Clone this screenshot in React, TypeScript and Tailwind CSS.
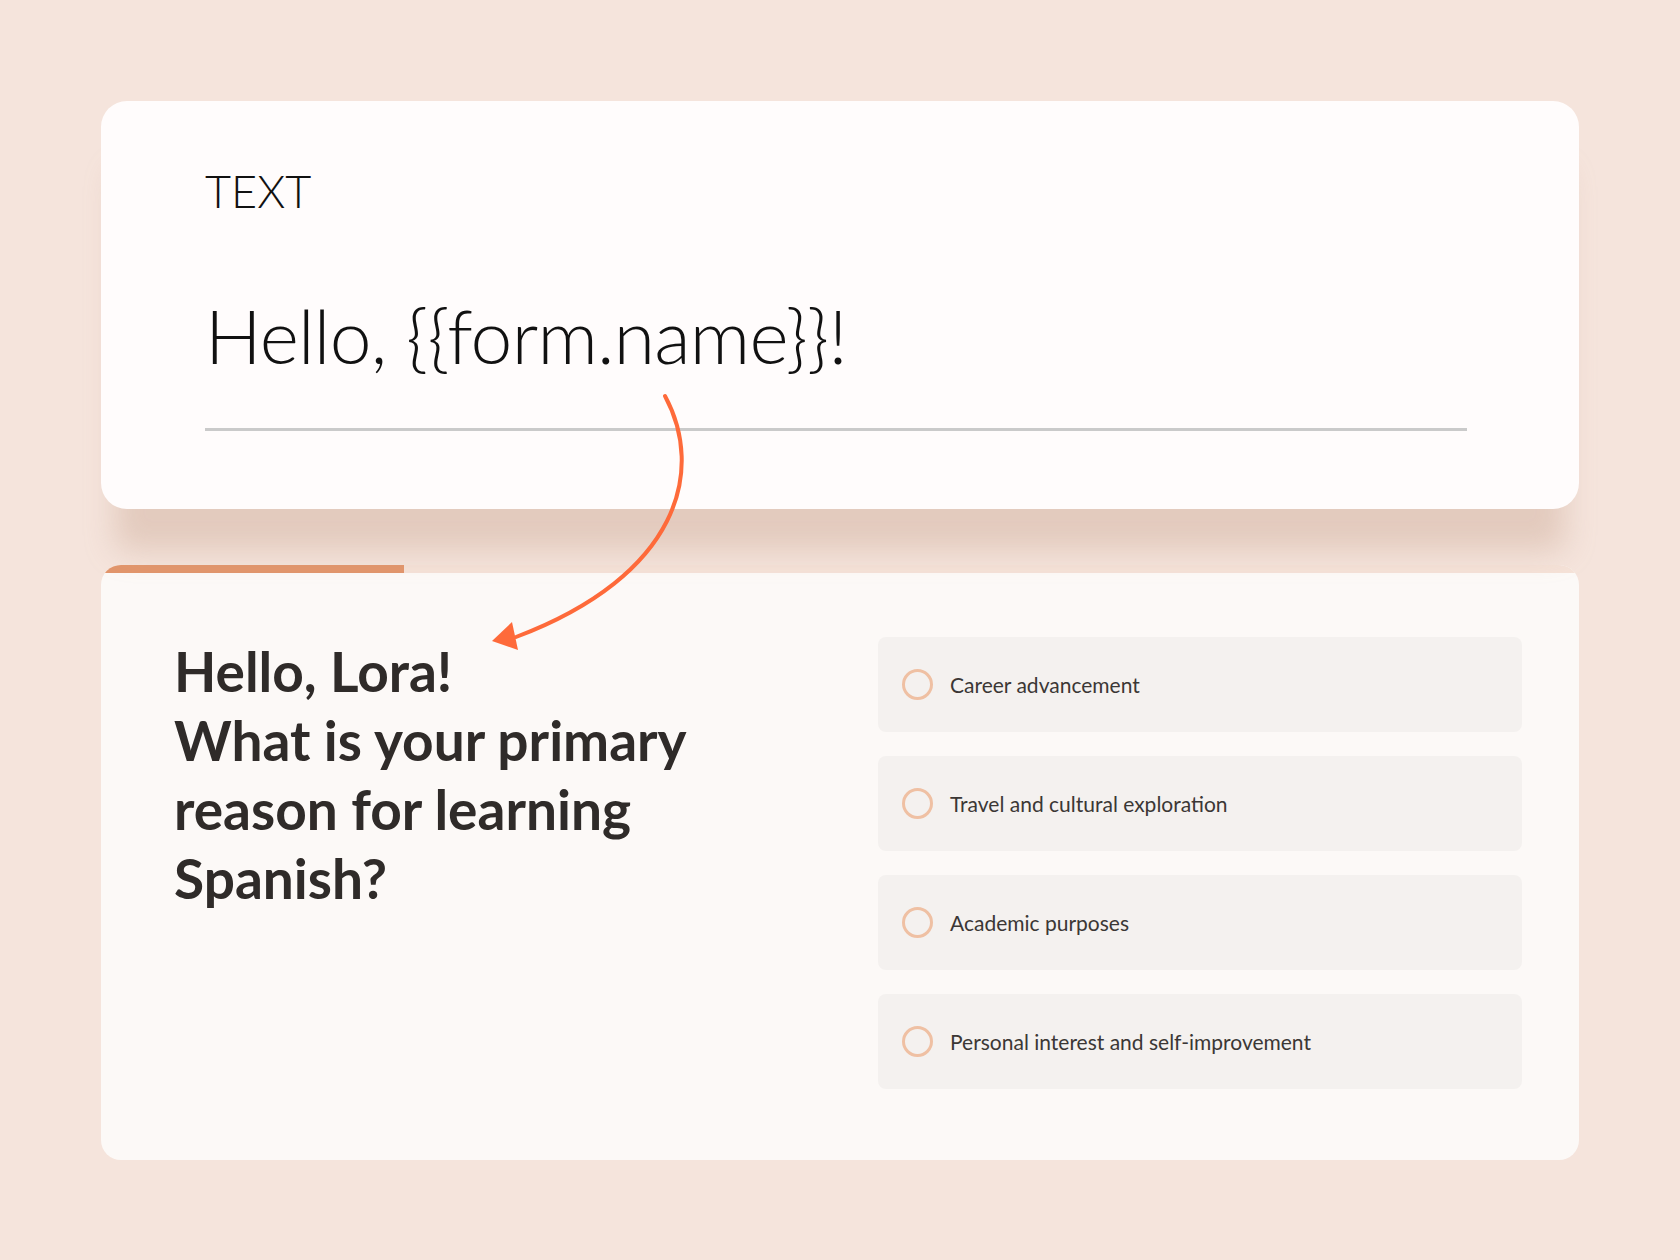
import React from 'react';

const options = [
  'Career advancement',
  'Travel and cultural exploration',
  'Academic purposes',
  'Personal interest and self-improvement',
];

function Arrow() {
  return (
    <svg
      className="pointer-events-none absolute left-0 top-0 z-20"
      width="1680"
      height="1260"
      viewBox="0 0 1680 1260"
      fill="none"
    >
      <path
        d="M665 396 C705 470, 680 575, 516 637"
        stroke="#fe6a3a"
        strokeWidth="4"
        strokeLinecap="round"
      />
      <polygon points="492,641 512,622 518,650" fill="#fe6a3a" />
    </svg>
  );
}

function OptionRow({ label }: { label: string }) {
  return (
    <div className="flex h-[95px] items-center gap-[17px] rounded-[8px] bg-[#f4f1ef] px-[24px]">
      <span className="h-[31px] w-[31px] shrink-0 rounded-full border-[3px] border-[#efc0a3]" />
      <span className="text-[21px] leading-none text-[#3b3735]">{label}</span>
    </div>
  );
}

export default function App() {
  return (
    <div
      className="relative min-h-[1260px] w-full bg-[#f5e4dc] px-[101px] pt-[101px]"
      style={{ fontFamily: 'Lato, "Noto Sans", sans-serif' }}
    >
      {/* Editor card */}
      <div className="relative z-10 h-[408px] rounded-[26px] bg-[#fffcfc] pl-[104px] pr-[112px] pt-[68px] shadow-[0_56px_30px_-14px_rgba(200,165,145,0.4)]">
        <div className="text-[45px] font-light leading-none text-[#111]">TEXT</div>
        <div className="mt-[84px] text-[75px] font-light leading-none tracking-[-0.01em] text-[#111]">
          {'Hello, {{form.name}}!'}
        </div>
        <div className="mt-[55px] h-[3px] bg-[#cacaca]" />
      </div>

      {/* Preview card */}
      <div className="relative mt-[56px] overflow-hidden rounded-[20px] bg-[#fcf9f7]">
        <div className="h-[8px] bg-[#f5e2d8]">
          <div className="h-full w-[303px] bg-[#e2956b]" />
        </div>
        <div className="flex justify-between pb-[71px] pl-[73px] pr-[57px] pt-[64px]">
          <h1 className="text-[55px] font-bold leading-[69px] text-[#2f2b29]">
            Hello, Lora!
            <br />
            What is your primary
            <br />
            reason for learning
            <br />
            Spanish?
          </h1>
          <div className="flex w-[644px] flex-col gap-[24px]">
            {options.map((o) => (
              <OptionRow key={o} label={o} />
            ))}
          </div>
        </div>
      </div>

      <Arrow />
    </div>
  );
}
